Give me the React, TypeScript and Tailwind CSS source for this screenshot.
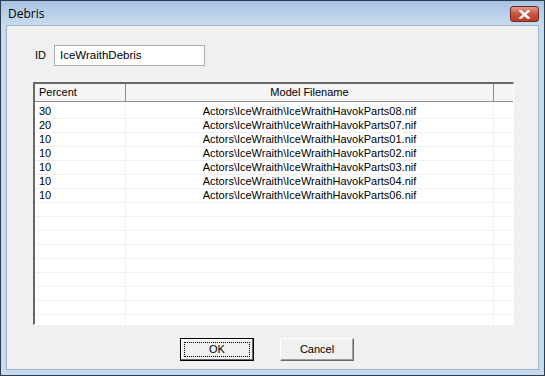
import React from 'react';

const rows = [
  { pct: '30', file: 'Actors\\IceWraith\\IceWraithHavokParts08.nif' },
  { pct: '20', file: 'Actors\\IceWraith\\IceWraithHavokParts07.nif' },
  { pct: '10', file: 'Actors\\IceWraith\\IceWraithHavokParts01.nif' },
  { pct: '10', file: 'Actors\\IceWraith\\IceWraithHavokParts02.nif' },
  { pct: '10', file: 'Actors\\IceWraith\\IceWraithHavokParts03.nif' },
  { pct: '10', file: 'Actors\\IceWraith\\IceWraithHavokParts04.nif' },
  { pct: '10', file: 'Actors\\IceWraith\\IceWraithHavokParts06.nif' },
];

const emptyRows = Array.from({ length: 9 });

const Row: React.FC<{ pct?: string; file?: string }> = ({ pct = '', file = '' }) => (
  <div className="flex h-[14px] shrink-0 border-b border-[#f0f0f0] leading-[13px]">
    <div className="w-[91px] pl-[4px] border-r border-[#f0f0f0]">{pct}</div>
    <div className="w-[368px] text-center border-r border-[#f0f0f0] whitespace-nowrap">{file}</div>
    <div className="flex-1" />
  </div>
);

const App: React.FC = () => {
  return (
    <div className="w-[545px] h-[376px] flex flex-col bg-[#c7daee] border border-[#2d3c4e] overflow-hidden font-['Liberation_Sans',sans-serif] text-[11px] text-black">
      {/* title bar */}
      <div className="h-[24px] flex items-center justify-between bg-gradient-to-b from-[#a8c3e2] to-[#c8dbef] pl-[7px] pr-[5px]">
        <span className="text-[12px] font-['Open_Sans',sans-serif] text-black pt-[1px]">Debris</span>
        <div className="w-[29px] h-[16px] mt-[2px] rounded-[3px] border border-[#6b2b22] bg-gradient-to-b from-[#e09a8d] via-[#c9513f] to-[#c33a24] flex items-center justify-center">
          <svg width="11" height="9" viewBox="0 0 11 9">
            <path d="M1.5 1 L9.5 8 M9.5 1 L1.5 8" stroke="white" strokeWidth="2.4" strokeLinecap="square" />
          </svg>
        </div>
      </div>

      {/* client area */}
      <div className="flex-1 mx-[5px] mb-[5px] border border-[#9fb3c8] bg-[#f0f0f0] flex flex-col">
        <div className="flex items-center mt-[19px] ml-[28px] gap-[5px]">
          <span className="w-[14px]">ID</span>
          <div className="w-[151px] h-[21px] bg-white border border-[#abadb3] flex items-center pl-[5px] text-[11.5px]">
            IceWraithDebris
          </div>
        </div>

        <div className="ml-[26px] mt-[16px] w-[481px] h-[243px] border-l-2 border-t-2 border-[#696969] border-r border-b border-r-white border-b-white bg-white flex flex-col overflow-hidden">
          <div className="flex h-[18px] shrink-0 bg-[#f4f4f4] border-b border-[#8f8f8f] leading-[17px]">
            <div className="w-[91px] pl-[4px] border-r border-[#8f8f8f]">Percent</div>
            <div className="w-[368px] text-center border-r border-[#8f8f8f]">Model Filename</div>
            <div className="flex-1" />
          </div>
          <div className="h-[3px] shrink-0" />
          {rows.map((r, i) => (
            <Row key={i} pct={r.pct} file={r.file} />
          ))}
          {emptyRows.map((_, i) => (
            <Row key={'e' + i} />
          ))}
        </div>

        <div className="flex gap-[26px] mt-[13px] pl-[173px]">
          <button className="w-[74px] h-[23px] bg-[#f0f0f0] border border-black shadow-[inset_-1px_-1px_0_#696969,inset_1px_1px_0_#ffffff] flex items-center justify-center p-[3px]">
            <span className="w-full h-full border border-dotted border-black flex items-center justify-center">OK</span>
          </button>
          <button className="w-[74px] h-[23px] bg-[#f0f0f0] border border-white border-r-[#696969] border-b-[#696969] shadow-[inset_-1px_-1px_0_#a0a0a0] flex items-center justify-center">
            Cancel
          </button>
        </div>
      </div>
    </div>
  );
};

export default App;
